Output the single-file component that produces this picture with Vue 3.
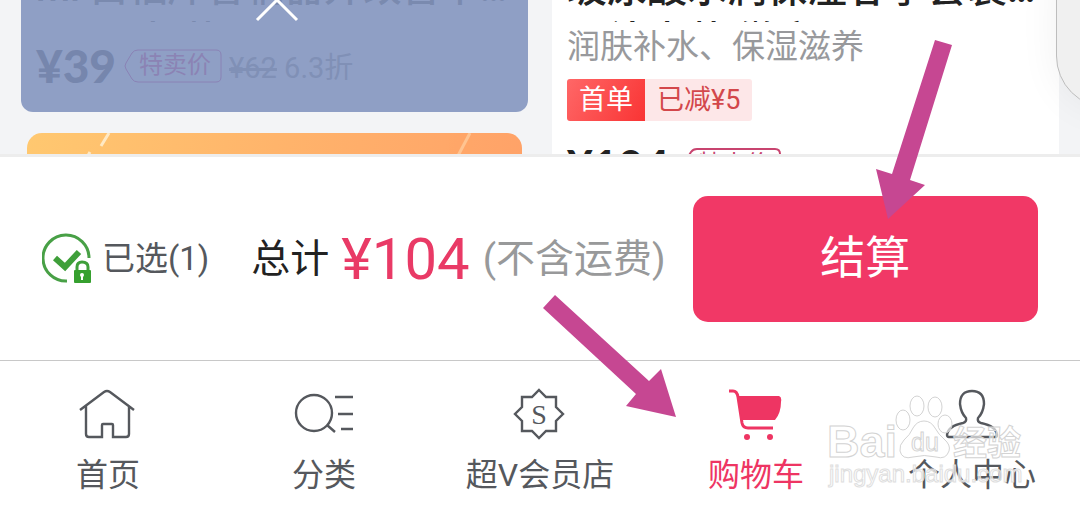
<script setup>
import { ref } from 'vue'

const selected = ref(true)
</script>

<template>
  <div class="page">
    <main class="feed">
      <div class="column">
        <article class="card card-dim">
          <div class="title"><p>mi 白福库香辆器弁改善平…<br />二 一 支 装</p></div>
          <div class="price-row">
            <strong class="price">¥39</strong>
            <span class="ticket">
              <svg viewBox="0 0 98 34" aria-hidden="true">
                <path d="M14 1H92Q97 1 97 6V28Q97 33 92 33H14Q10 33 8 30L2 20Q0 17 2 14L8 4Q10 1 14 1Z" />
              </svg>
              <span>特卖价</span>
            </span>
            <span class="was"><del>¥62</del> 6.3折</span>
          </div>
          <svg class="chevron" viewBox="0 0 44 24" aria-hidden="true"><path d="M2 20L22 0L42 20" /></svg>
        </article>
        <article class="promo">
          <svg viewBox="0 0 495 40" preserveAspectRatio="none" aria-hidden="true">
            <path d="M82 0L74 13M63 19L52 38" stroke-width="3" />
            <path d="M443 0L424 36" stroke-width="3" opacity=".45" />
          </svg>
        </article>
      </div>
      <div class="column">
        <article class="card card-white">
          <div class="title title-large"><p>玻尿酸水润保湿春季套装…<br />二补水装 微商</p></div>
          <p class="subtitle">润肤补水、保湿滋养</p>
          <div class="tags"><span class="tag-first">首单</span><span class="tag-cut">已减¥5</span></div>
          <div class="price-row second">
            <strong class="price">¥104</strong>
            <span class="ticket pink">
              <svg viewBox="0 0 98 34" aria-hidden="true">
                <path d="M14 1H92Q97 1 97 6V28Q97 33 92 33H14Q10 33 8 30L2 20Q0 17 2 14L8 4Q10 1 14 1Z" />
              </svg>
              <span>特卖价</span>
            </span>
          </div>
        </article>
      </div>
      <div class="float-pill"></div>
    </main>

    <section class="checkout">
      <label class="select">
        <input v-model="selected" type="checkbox" />
        <svg viewBox="0 0 50 52" aria-hidden="true">
          <path d="M47 25A23 23 0 1 0 25 48" fill="none" stroke="#48a046" stroke-width="3" />
          <path d="M13 25L23 34L37 19" fill="none" stroke="#3f9f3a" stroke-width="6" />
          <path d="M35 38V34Q35 29 40 29Q46 29 46 34V38" fill="none" stroke="#3f9f3a" stroke-width="3" />
          <rect x="32" y="37" width="17" height="13" rx="1" fill="#36a02f" />
          <circle cx="40" cy="42" r="2" fill="#fff" />
          <path d="M40 42V47" stroke="#fff" stroke-width="2" />
        </svg>
        <span>已选(1)</span>
      </label>
      <p class="total">
        <span>总计</span><strong>¥104</strong><small>(不含运费)</small>
      </p>
      <button type="button" class="pay">结算</button>
    </section>

    <nav class="tabs">
      <a href="#home">
        <svg viewBox="0 0 60 56" aria-hidden="true">
          <path d="M2 24L26 6Q29 4 32 6L56 24M8 20V48Q8 51 11 51H24V39Q24 38 25 38H34Q35 38 35 39V51H48Q51 51 51 48V20" />
        </svg>
        <span>首页</span>
      </a>
      <a href="#category">
        <svg viewBox="0 0 60 56" aria-hidden="true">
          <circle cx="20" cy="27" r="18" />
          <path d="M33 39L41 46M41 11H59M44 28H59M47 43H59" />
        </svg>
        <span>分类</span>
      </a>
      <a href="#member">
        <svg viewBox="0 0 60 56" aria-hidden="true">
          <path d="M29 4L36 11H46V21L53 28L46 35V45H36L29 52L22 45H12V35L5 28L12 21V11H22Z" />
          <text x="29" y="38" text-anchor="middle">S</text>
        </svg>
        <span>超V会员店</span>
      </a>
      <a href="#cart" class="active" aria-current="page">
        <svg viewBox="0 0 60 56" aria-hidden="true">
          <path d="M3 5H7Q11 5 12 11L16 37Q17 42 22 42H47" />
          <path class="solid" d="M12 10H53Q56 11 55 16Q55 27 49 34H16Z" />
          <circle class="solid" cx="21" cy="51" r="3" />
          <circle class="solid" cx="44" cy="51" r="3" />
        </svg>
        <span>购物车</span>
      </a>
      <a href="#profile">
        <svg viewBox="0 0 60 56" aria-hidden="true">
          <path d="M30 5Q42 5 42 18Q41 27 36 32Q35 36 39 37Q54 40 55 49Q55 51 53 51H7Q5 51 5 49Q6 40 21 37Q25 36 24 32Q19 27 18 18Q18 5 30 5Z" />
        </svg>
        <span>个人中心</span>
      </a>
    </nav>

    <svg class="watermark" viewBox="0 0 220 114" aria-hidden="true">
      <text x="7" y="77" font-size="45" font-weight="bold">Bai</text>
      <ellipse cx="83" cy="40" rx="7" ry="10" />
      <ellipse cx="97" cy="26" rx="7" ry="10" />
      <ellipse cx="115" cy="27" rx="7" ry="10" />
      <ellipse cx="125" cy="44" rx="7" ry="9" />
      <path d="M104 41Q111 41 115 48Q119 55 124 59Q131 65 129 71Q126 80 116 77Q104 74 93 77Q82 80 80 71Q79 65 84 60Q90 55 93 48Q97 41 104 41Z" />
      <text x="91" y="71" font-size="25">du</text>
      <text class="cjk" x="133" y="75" font-size="34" font-weight="bold">经验</text>
      <text class="address" x="9" y="102" font-size="24">jingyan.baidu.com</text>
    </svg>

    <svg class="arrow arrow-pay" viewBox="0 0 76 179" aria-hidden="true">
      <path d="M59 0L76 5L34 140L49 145L12 179L0 129L16 134Z" />
    </svg>
    <svg class="arrow arrow-cart" viewBox="0 0 133 122" aria-hidden="true">
      <path d="M0 13L12 0L106 86L118 74L133 122L83 111L93 99Z" />
    </svg>
  </div>
</template>

<style>
body {
  margin: 0;
  background: #fff;
}
</style>

<style scoped>
.page {
  position: relative;
  overflow: hidden;
  font-family: Roboto, "Noto Sans CJK SC", sans-serif;
  color: #55585d;
}
p {
  margin: 0;
}
.feed {
  position: relative;
  display: grid;
  grid-template-columns: 1fr 1fr;
  gap: 24px;
  box-sizing: border-box;
  height: 157px;
  padding: 0 21px;
  overflow: hidden;
  background: #f3f4f6;
  border-bottom: 3px solid #ededed;
}
.card {
  position: relative;
  padding: 0 15px;
}
.card-dim {
  height: 112px;
  box-sizing: border-box;
  background: #8f9fc5;
  border-radius: 0 0 12px 12px;
}
.card-white {
  min-height: 157px;
  background: #fff;
}
.title {
  display: flex;
  align-items: flex-start;
  height: 22px;
  overflow: hidden;
  color: #222;
}
.card-dim .title {
  color: #7a8aaf;
}
.title p {
  margin-top: -38px;
  font-size: 39px;
  font-weight: 500;
  line-height: 53px;
  white-space: nowrap;
}
.title-large p {
  font-size: 40px;
}
.price-row {
  display: flex;
  align-items: center;
  height: 60px;
  margin-top: 14px;
  line-height: 60px;
}
.price {
  font-family: Lato, sans-serif;
  font-size: 46px;
  font-weight: 900;
  color: #7686ad;
}
.ticket {
  position: relative;
  flex: none;
  width: 98px;
  height: 34px;
  margin: 0 7px 0 8px;
  box-sizing: border-box;
  padding-left: 15px;
  font-size: 24px;
  line-height: 32px;
  color: #8b83b4;
}
.ticket svg {
  position: absolute;
  inset: 0;
  fill: none;
  stroke: #8a82b5;
  stroke-width: 1;
}
.was {
  padding-top: 4px;
  font-size: 29px;
  color: #8090b6;
}
del {
  text-decoration-thickness: 3px;
}
.chevron {
  position: absolute;
  top: 0;
  left: 50%;
  width: 44px;
  height: 24px;
  margin-left: -20px;
  fill: none;
  stroke: #fff;
  stroke-width: 3;
}
.promo {
  height: 40px;
  margin: 21px 6px 0;
  border-radius: 15px;
  overflow: hidden;
  background: linear-gradient(100deg, #ffc870, #ffb46b 50%, #ffa268);
}
.promo svg {
  display: block;
  width: 100%;
  height: 40px;
  stroke: #ffe9c4;
}
.subtitle {
  margin-top: 5px;
  font-size: 33px;
  line-height: 40px;
  color: #98999c;
  white-space: nowrap;
}
.tags {
  display: flex;
  margin-top: 12px;
  font-size: 27px;
  line-height: 42px;
}
.tag-first {
  padding: 0 12px;
  background: linear-gradient(120deg, #ff6767, #f93434);
  border-radius: 3px 0 0 3px;
  color: #fff;
}
.tag-cut {
  padding: 0 12px;
  background: #fde7e8;
  border-radius: 0 3px 3px 0;
  color: #d3474b;
}
.second .price {
  font-size: 44px;
  color: #222;
}
.ticket.pink {
  margin-left: 14px;
  color: #c8446f;
}
.ticket.pink svg {
  stroke: #c8446f;
  stroke-width: 2;
}
.float-pill {
  position: absolute;
  top: -60px;
  right: -80px;
  width: 102px;
  height: 166px;
  border: 1px solid #bdbdbd;
  border-radius: 52px;
  background: #f0f0f0;
  box-shadow: 0 0 40px rgba(0, 0, 0, 0.06);
}
.checkout {
  display: flex;
  align-items: center;
  padding: 39px 42px 38px;
  background: #fff;
  white-space: nowrap;
}
.select {
  position: relative;
  display: flex;
  align-items: center;
  gap: 10px;
  font-size: 33px;
  line-height: 44px;
}
.select input {
  position: absolute;
  width: 50px;
  height: 52px;
  margin: 0;
  opacity: 0;
}
.select svg {
  width: 50px;
  height: 52px;
}
.total {
  display: flex;
  align-items: center;
  margin: 0 27px 0 42px;
  font-size: 39px;
  line-height: 60px;
  color: #222;
}
.total strong {
  margin: 0 13px 0 12px;
  font-size: 58px;
  font-weight: 400;
  color: #e93a66;
}
.total small {
  font-size: 39px;
  color: #98999a;
}
.pay {
  flex: 1;
  height: 126px;
  padding: 0 0 10px;
  border: 0;
  border-radius: 15px;
  background: #f13866;
  color: #fff;
  font: inherit;
  font-size: 45px;
}
.tabs {
  display: grid;
  grid-template-columns: repeat(5, 1fr);
  padding: 25px 0 16px;
  border-top: 1px solid #c8c8c8;
  background: #fff;
}
.tabs a {
  display: flex;
  flex-direction: column;
  align-items: center;
  gap: 13px;
  font-size: 32px;
  line-height: 40px;
  color: #55585d;
  text-decoration: none;
}
.tabs svg {
  width: 60px;
  height: 56px;
  fill: none;
  stroke: currentColor;
  stroke-width: 2.4;
}
.tabs text {
  fill: currentColor;
  stroke: none;
  font: 28px "Liberation Serif", serif;
}
.tabs .solid {
  fill: currentColor;
  stroke: none;
}
.tabs a.active {
  color: #ee3563;
}
.tabs .active svg {
  stroke-width: 3;
}
.watermark {
  position: absolute;
  right: 40px;
  bottom: 17px;
  width: 220px;
  height: 114px;
  pointer-events: none;
  fill: rgba(255, 255, 255, 0.65);
  stroke: #d3d3d3;
  stroke-width: 1;
  font-family: "Liberation Sans", sans-serif;
}
.watermark .cjk {
  font-family: "Noto Sans CJK SC", sans-serif;
}
.watermark .address {
  stroke: #dedede;
}
.arrow {
  position: absolute;
  pointer-events: none;
  fill: #c64792;
}
.arrow-pay {
  top: 40px;
  right: 128px;
  width: 76px;
  height: 179px;
}
.arrow-cart {
  top: 295px;
  left: 543px;
  width: 133px;
  height: 122px;
}
</style>
